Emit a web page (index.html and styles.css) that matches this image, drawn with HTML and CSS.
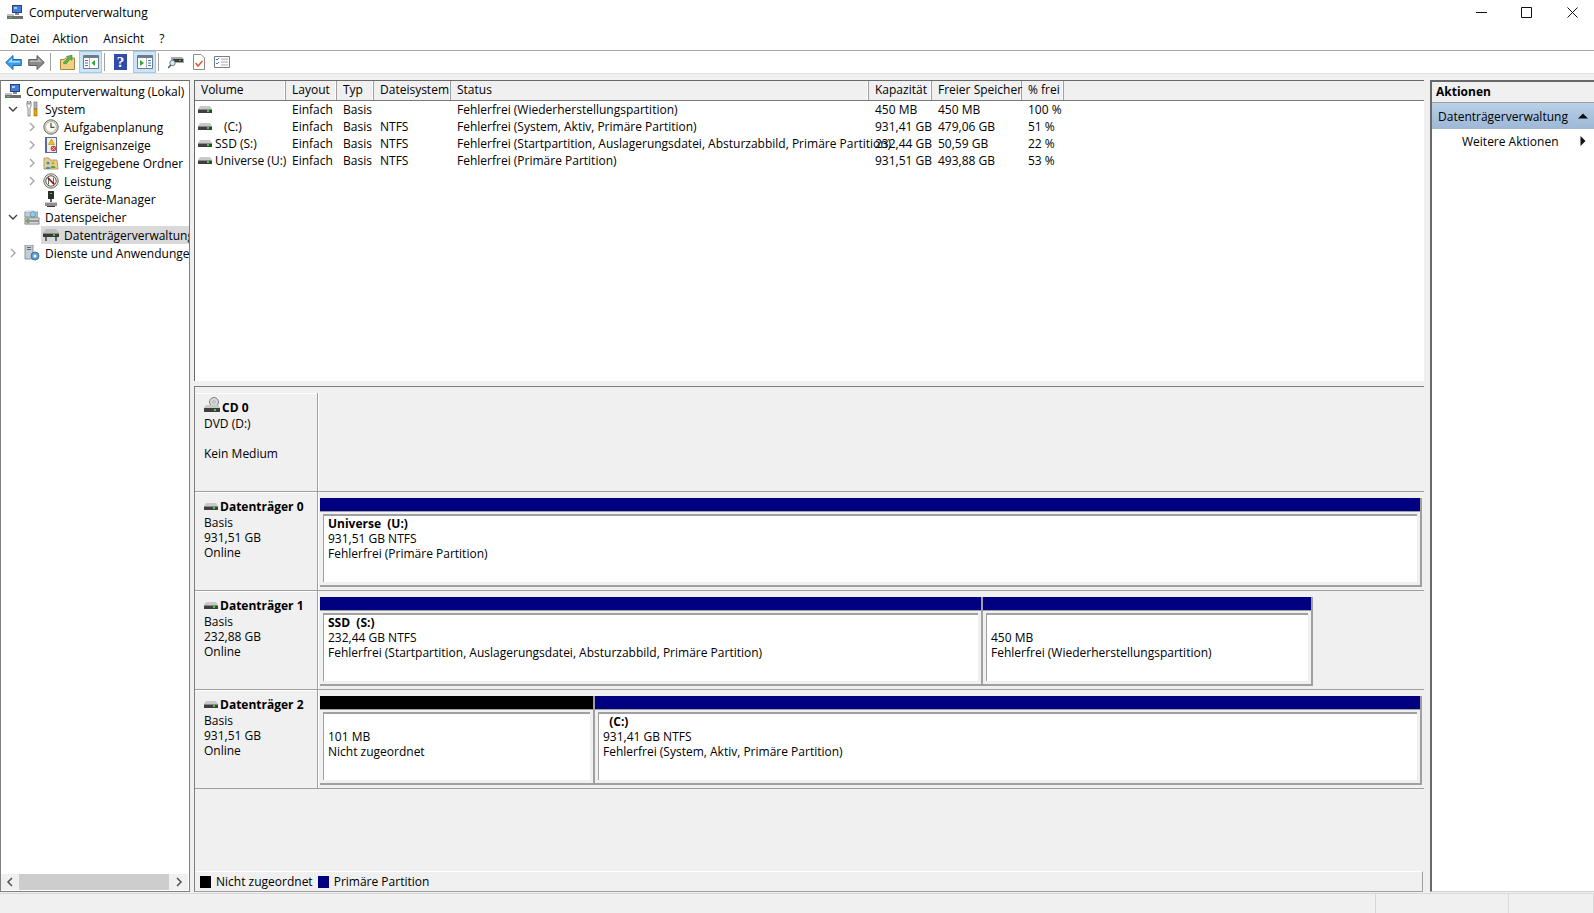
FILE: index.html
```html
<!DOCTYPE html>
<html lang="de">
  <head>
    <meta charset="UTF-8" />
    <meta name="viewport" content="width=device-width, initial-scale=1.0" />
    <title>Computerverwaltung</title>
    <link rel="stylesheet" href="styles.css">
  </head>
  <body>
    <svg class="sprites" width="0" height="0">
      <symbol id="i-disk" viewBox="0 0 14 7">
        <path d="M2 0h10l2 3H0z" fill="#c9c9c9"/>
        <path d="M0 3h14v4H0z" fill="#3f3f3f"/>
        <path d="M0 3h14v1H0z" fill="#8a8a8a"/>
        <path d="M9 4h2v2H9z" fill="#35d835"/>
      </symbol>
      <symbol id="i-computer" viewBox="0 0 16 16">
        <path d="M5 1h10v8H5z" fill="#2b3f8e"/>
        <path d="M6 2h8v6H6z" fill="#3f7fd8"/>
        <path d="M7 3h3v2H7z" fill="#a9d3f5"/>
        <path d="M8 9h4v2H8z" fill="#8b8b8b"/>
        <path d="M0 10h7v2H0z" fill="#c2c2c2"/>
        <path d="M0 12h16v3H0z" fill="#6e6e6e"/>
        <path d="M2 13h3v1H2z" fill="#35d835"/>
      </symbol>
      <symbol id="i-tools" viewBox="0 0 16 16">
        <path d="M3 1v4l1 2v8h2V7l1-2V1L6 0v3H4V0z" fill="#fff" stroke="#6a6a6a" stroke-width=".8"/>
        <path d="M10 1h3v7h-3z" fill="#b5b5b5" stroke="#6a6a6a" stroke-width=".6"/>
        <path d="M10 8h3v7h-3z" fill="#e9a90f" stroke="#8a6300" stroke-width=".6"/>
      </symbol>
      <symbol id="i-clock" viewBox="0 0 16 16">
        <circle cx="8" cy="8" r="7.2" fill="#d9d4c2" stroke="#6f6f63"/>
        <circle cx="8" cy="8" r="5.3" fill="#fbfaf3" stroke="#a8a593" stroke-width=".6"/>
        <path d="M8 4v4.3h3.4" fill="none" stroke="#4c4c4c" stroke-width="1.2"/>
      </symbol>
      <symbol id="i-event" viewBox="0 0 16 16">
        <path d="M2 0h12v16H2z" fill="#5a6a9c"/>
        <path d="M4 1h9v14H4z" fill="#f1efe6"/>
        <path d="M8.5 2l3 5.5h-6z" fill="#f2c21a" stroke="#9a7a00" stroke-width=".5"/>
        <circle cx="10.5" cy="11.5" r="2.8" fill="#d83a3a"/>
        <path d="M9.3 10.3l2.4 2.4m0-2.4l-2.4 2.4" stroke="#fff" stroke-width=".8"/>
      </symbol>
      <symbol id="i-share" viewBox="0 0 16 16">
        <path d="M1 3h5l1 2h7l1 9H1z" fill="#e8cf8a" stroke="#a98f4d" stroke-width=".8"/>
        <circle cx="5" cy="8" r="1.6" fill="#3f8ed8"/>
        <circle cx="10" cy="8" r="1.6" fill="#c9a24a"/>
        <path d="M2.5 14c0-3 5-3 5 0z" fill="#3f8ed8"/>
        <path d="M7.5 13c0-3 5-3 5 0z" fill="#4aa84a"/>
      </symbol>
      <symbol id="i-perf" viewBox="0 0 16 16">
        <circle cx="8" cy="8" r="7.2" fill="#e7e4d6" stroke="#6f6f63"/>
        <circle cx="8" cy="8" r="5.2" fill="#fff" stroke="#333" stroke-width=".8"/>
        <path d="M4.6 4.6l6.8 6.8" stroke="#d42020" stroke-width="1.6"/>
        <path d="M5.5 11.5V5l5 6V4.5" fill="none" stroke="#222" stroke-width=".7"/>
      </symbol>
      <symbol id="i-device" viewBox="0 0 16 16">
        <path d="M5 0h6v8H5z" fill="#2d2d2d"/>
        <path d="M7 2h2v1H7z" fill="#35d835"/>
        <path d="M7 8h2v3H7z" fill="#666"/>
        <path d="M2 11h12v4H2z" fill="#8d8d8d"/>
        <path d="M2 11h12v1H2z" fill="#d0d0d0"/>
        <path d="M4 15h8v1H4z" fill="#333"/>
      </symbol>
      <symbol id="i-storage" viewBox="0 0 18 18">
        <path d="M1 3h14v6H1z" fill="#c2ccd4" stroke="#6e7a84" stroke-width=".8"/>
        <path d="M3 1h10l2 2H1z" fill="#e4e9ee"/>
        <circle cx="10" cy="6" r="3" fill="#8fd0ee" stroke="#3b7fa8" stroke-width=".7"/>
        <path d="M1 10h16v3H1z" fill="#d6d6d6" stroke="#6e6e6e" stroke-width=".8"/>
        <path d="M1 14h16v3H1z" fill="#d6d6d6" stroke="#6e6e6e" stroke-width=".8"/>
        <path d="M3 11h3v1H3zM3 15h3v1H3z" fill="#35a835"/>
      </symbol>
      <symbol id="i-diskmgmt" viewBox="0 0 16 12">
        <path d="M3 0h10l3 4H0z" fill="#bdbdbd"/>
        <path d="M0 4h16v4H0z" fill="#3a3a3a"/>
        <path d="M0 4h16v1H0z" fill="#8a8a8a"/>
        <path d="M10 5h2v2h-2z" fill="#35d835"/>
        <path d="M2 8h2v4H2zM12 8h2v4h-2z" fill="#6a6a6a"/>
      </symbol>
      <symbol id="i-services" viewBox="0 0 16 16">
        <path d="M1 0h8v14H1z" fill="#c6cdd6" stroke="#76808c" stroke-width=".8"/>
        <path d="M3 2h4v1H3zM3 4h4v1H3z" fill="#5b6a7c"/>
        <circle cx="11" cy="11" r="4" fill="#5f9fd0" stroke="#2f6a9a" stroke-width=".8"/>
        <circle cx="11" cy="11" r="1.5" fill="#fff"/>
      </symbol>
      <symbol id="i-back" viewBox="0 0 17 15">
        <path d="M8 .5L.7 7.5 8 14.5v-4h8.300v-6H8z" fill="#3a9de8" stroke="#1c6bb0"/>
        <path d="M7 3v3h8v1.500H3z" fill="#a6dcfa"/>
      </symbol>
      <symbol id="i-forward" viewBox="0 0 17 15">
        <path d="M9 .5l7.300 7L9 14.500v-4H.7v-6H9z" fill="#8a8a8a" stroke="#5e5e5e"/>
        <path d="M2 5.500h8V3l4 4H2z" fill="#b8b8b8"/>
      </symbol>
      <symbol id="i-folderup" viewBox="0 0 15 16">
        <path d="M.5 5.500h4l1-1.500h9v11.500H.5z" fill="#eed184" stroke="#a8873a"/>
        <path d="M3 9l5-5-1.500-1.500L12 1v5.500L10.300 5 6 10z" fill="#5cb84a" stroke="#2c7a20" stroke-width=".5"/>
      </symbol>
      <symbol id="i-pane-left" viewBox="0 0 16 14">
        <path d="M.5.500h15v13H.5z" fill="#fff" stroke="#6d7b8a"/>
        <path d="M1 1h14v2H1z" fill="#6d7b8a"/>
        <path d="M2 5h3v1H2zM2 7.500h3v1H2zM2 10h3v1H2z" fill="#3a75b8"/>
        <path d="M6.500 3v10" stroke="#a8b2bc"/>
        <path d="M12 5v6L8.500 8z" fill="#2fa82f"/>
      </symbol>
      <symbol id="i-pane-right" viewBox="0 0 16 14">
        <path d="M.5.500h15v13H.5z" fill="#fff" stroke="#6d7b8a"/>
        <path d="M1 1h14v2H1z" fill="#6d7b8a"/>
        <path d="M11 5h3v1h-3zM11 7.500h3v1h-3zM11 10h3v1h-3z" fill="#3a75b8"/>
        <path d="M9.500 3v10" stroke="#a8b2bc"/>
        <path d="M3 5v6l4-3z" fill="#2fa82f"/>
      </symbol>
      <symbol id="i-props" viewBox="0 0 16 14">
        <path d="M3 2h11l2 2v4H3z" fill="#a9a9a9"/>
        <path d="M5 4h10v3H5z" fill="#3a3a3a"/>
        <path d="M11 5h2v1h-2z" fill="#35d835"/>
        <circle cx="4.500" cy="8" r="2.700" fill="#d7ecf7" stroke="#6a7d8a"/>
        <path d="M3 10l-3 3" stroke="#555" stroke-width="1.500"/>
      </symbol>
      <symbol id="i-doc" viewBox="0 0 12 16">
        <path d="M.5.500h7.500l3.500 3.500v11.500H.5z" fill="#fff" stroke="#8a8a8a"/>
        <path d="M2.500 9l2.500 3 4.500-5" fill="none" stroke="#e05a2b" stroke-width="1.500"/>
      </symbol>
      <symbol id="i-list" viewBox="0 0 16 12">
        <path d="M.5.500h15v11H.5z" fill="#fff" stroke="#7d7d7d"/>
        <path d="M2 3l1 1 2-2M2 7l1 1 2-2" fill="none" stroke="#3a7fd0"/>
        <path d="M7 3h7M7 6h7M7 9h7" stroke="#a8a8a8"/>
      </symbol>
      <symbol id="i-cd" viewBox="0 0 16 16">
        <circle cx="10" cy="5" r="4.500" fill="#d8d8d8" stroke="#808080"/>
        <circle cx="10" cy="5" r="1.200" fill="#fff" stroke="#808080" stroke-width=".6"/>
        <path d="M2 8h12l2 3H0z" fill="#c9c9c9"/>
        <path d="M0 11h16v4H0z" fill="#3f3f3f"/>
        <path d="M10 12h2v2h-2z" fill="#35d835"/>
      </symbol>
      <symbol id="i-open" viewBox="0 0 10 10">
        <path d="M1 3l4 4 4-4" fill="none" stroke="#404040" stroke-width="1.400"/>
      </symbol>
      <symbol id="i-closed" viewBox="0 0 10 10">
        <path d="M3 1l4 4-4 4" fill="none" stroke="#a6a6a6" stroke-width="1.400"/>
      </symbol>
    </svg>

    <header class="titlebar">
      <svg class="app-icon"><use href="#i-computer"/></svg>
      <span class="app-title">Computerverwaltung</span>
      <div class="window-buttons">
        <span class="win-btn"><svg width="11" height="11" viewBox="0 0 11 11"><path d="M0 5.500h11" stroke="#111"/></svg></span>
        <span class="win-btn"><svg width="11" height="11" viewBox="0 0 11 11"><path d="M.5.500h10v10H.5z" fill="none" stroke="#111"/></svg></span>
        <span class="win-btn"><svg width="11" height="11" viewBox="0 0 11 11"><path d="M.5.500l10 10m0-10l-10 10" stroke="#111"/></svg></span>
      </div>
    </header>

    <nav class="menubar">
      <span class="menu-datei">Datei</span>
      <span class="menu-aktion">Aktion</span>
      <span class="menu-ansicht">Ansicht</span>
      <span class="menu-help">?</span>
    </nav>

    <div class="toolbar">
      <svg class="tb-back"><use href="#i-back"/></svg>
      <svg class="tb-forward"><use href="#i-forward"/></svg>
      <span class="tb-sep"></span>
      <svg class="tb-up"><use href="#i-folderup"/></svg>
      <span class="tb-toggle"><svg class="tb-pane"><use href="#i-pane-left"/></svg></span>
      <span class="tb-sep tb-sep-tight"></span>
      <span class="tb-help">?</span>
      <span class="tb-toggle tb-toggle-second"><svg class="tb-pane"><use href="#i-pane-right"/></svg></span>
      <span class="tb-sep tb-sep-tight"></span>
      <svg class="tb-props"><use href="#i-props"/></svg>
      <svg class="tb-doc"><use href="#i-doc"/></svg>
      <svg class="tb-list"><use href="#i-list"/></svg>
    </div>

    <main class="main">
      <aside class="tree">
        <div class="tree-rows">
          <div class="tree-row">
            <div class="tree-item"><svg class="tree-icon"><use href="#i-computer"/></svg><span>Computerverwaltung (Lokal)</span></div>
          </div>
          <div class="tree-row level-1">
            <svg class="twisty"><use href="#i-open"/></svg>
            <div class="tree-item"><svg class="tree-icon"><use href="#i-tools"/></svg><span>System</span></div>
          </div>
          <div class="tree-row level-2">
            <svg class="twisty"><use href="#i-closed"/></svg>
            <div class="tree-item"><svg class="tree-icon"><use href="#i-clock"/></svg><span>Aufgabenplanung</span></div>
          </div>
          <div class="tree-row level-2">
            <svg class="twisty"><use href="#i-closed"/></svg>
            <div class="tree-item"><svg class="tree-icon"><use href="#i-event"/></svg><span>Ereignisanzeige</span></div>
          </div>
          <div class="tree-row level-2">
            <svg class="twisty"><use href="#i-closed"/></svg>
            <div class="tree-item"><svg class="tree-icon"><use href="#i-share"/></svg><span>Freigegebene Ordner</span></div>
          </div>
          <div class="tree-row level-2">
            <svg class="twisty"><use href="#i-closed"/></svg>
            <div class="tree-item"><svg class="tree-icon"><use href="#i-perf"/></svg><span>Leistung</span></div>
          </div>
          <div class="tree-row level-2">
            <span class="twisty"></span>
            <div class="tree-item"><svg class="tree-icon"><use href="#i-device"/></svg><span>Geräte-Manager</span></div>
          </div>
          <div class="tree-row level-1">
            <svg class="twisty"><use href="#i-open"/></svg>
            <div class="tree-item"><svg class="tree-icon"><use href="#i-storage"/></svg><span>Datenspeicher</span></div>
          </div>
          <div class="tree-row level-2">
            <span class="twisty"></span>
            <div class="tree-item selected"><svg class="tree-icon"><use href="#i-diskmgmt"/></svg><span>Datenträgerverwaltung</span></div>
          </div>
          <div class="tree-row level-1">
            <svg class="twisty"><use href="#i-closed"/></svg>
            <div class="tree-item"><svg class="tree-icon"><use href="#i-services"/></svg><span>Dienste und Anwendungen</span></div>
          </div>
        </div>
        <div class="hscroll">
          <svg class="hscroll-arrow" viewBox="0 0 10 10"><path d="M7 1L3 5l4 4" fill="none" stroke="#505050" stroke-width="1.500"/></svg>
          <div class="hscroll-track"><div class="hscroll-thumb"></div></div>
          <svg class="hscroll-arrow" viewBox="0 0 10 10"><path d="M3 1l4 4-4 4" fill="none" stroke="#505050" stroke-width="1.500"/></svg>
        </div>
      </aside>

      <section class="center">
        <div class="volumes">
          <div class="vol-head">
            <div class="vol-columns">
              <span>Volume</span>
              <span>Layout</span>
              <span>Typ</span>
              <span>Dateisystem</span>
              <span>Status</span>
              <span>Kapazität</span>
              <span>Freier Speicher</span>
              <span>% frei</span>
            </div>
          </div>
          <div class="vol-row vol-columns">
            <span class="vol-name"><svg class="disk-icon"><use href="#i-disk"/></svg></span>
            <span>Einfach</span><span>Basis</span><span></span>
            <span>Fehlerfrei (Wiederherstellungspartition)</span>
            <span>450 MB</span><span>450 MB</span><span>100 %</span>
          </div>
          <div class="vol-row vol-columns">
            <span class="vol-name"><svg class="disk-icon"><use href="#i-disk"/></svg><span class="vol-space">(C:)</span></span>
            <span>Einfach</span><span>Basis</span><span>NTFS</span>
            <span>Fehlerfrei (System, Aktiv, Primäre Partition)</span>
            <span>931,41 GB</span><span>479,06 GB</span><span>51 %</span>
          </div>
          <div class="vol-row vol-columns">
            <span class="vol-name"><svg class="disk-icon"><use href="#i-disk"/></svg>SSD (S:)</span>
            <span>Einfach</span><span>Basis</span><span>NTFS</span>
            <span>Fehlerfrei (Startpartition, Auslagerungsdatei, Absturzabbild, Primäre Partition)</span>
            <span>232,44 GB</span><span>50,59 GB</span><span>22 %</span>
          </div>
          <div class="vol-row vol-columns">
            <span class="vol-name"><svg class="disk-icon"><use href="#i-disk"/></svg>Universe (U:)</span>
            <span>Einfach</span><span>Basis</span><span>NTFS</span>
            <span>Fehlerfrei (Primäre Partition)</span>
            <span>931,51 GB</span><span>493,88 GB</span><span>53 %</span>
          </div>
        </div>

        <div class="disks">
          <div class="disk-row">
            <div class="disk-label">
              <div class="disk-name"><svg class="cd-icon"><use href="#i-cd"/></svg>CD 0</div>
              <div>DVD (D:)</div>
              <div>&nbsp;</div>
              <div>Kein Medium</div>
            </div>
            <div class="disk-parts"></div>
          </div>

          <div class="disk-row">
            <div class="disk-label">
              <div class="disk-name"><svg class="disk-icon"><use href="#i-disk"/></svg>Datenträger 0</div>
              <div>Basis</div>
              <div>931,51 GB</div>
              <div>Online</div>
            </div>
            <div class="disk-parts">
              <div class="part part-full">
                <div class="part-bar"></div>
                <div class="part-body">
                  <div class="part-name">Universe&nbsp; (U:)</div>
                  <div>931,51 GB NTFS</div>
                  <div>Fehlerfrei (Primäre Partition)</div>
                </div>
              </div>
            </div>
          </div>

          <div class="disk-row">
            <div class="disk-label">
              <div class="disk-name"><svg class="disk-icon"><use href="#i-disk"/></svg>Datenträger 1</div>
              <div>Basis</div>
              <div>232,88 GB</div>
              <div>Online</div>
            </div>
            <div class="disk-parts">
              <div class="part part-ssd">
                <div class="part-bar"></div>
                <div class="part-body">
                  <div class="part-name">SSD&nbsp; (S:)</div>
                  <div>232,44 GB NTFS</div>
                  <div>Fehlerfrei (Startpartition, Auslagerungsdatei, Absturzabbild, Primäre Partition)</div>
                </div>
              </div>
              <div class="part part-recovery">
                <div class="part-bar"></div>
                <div class="part-body">
                  <div>&nbsp;</div>
                  <div>450 MB</div>
                  <div>Fehlerfrei (Wiederherstellungspartition)</div>
                </div>
              </div>
            </div>
          </div>

          <div class="disk-row">
            <div class="disk-label">
              <div class="disk-name"><svg class="disk-icon"><use href="#i-disk"/></svg>Datenträger 2</div>
              <div>Basis</div>
              <div>931,51 GB</div>
              <div>Online</div>
            </div>
            <div class="disk-parts">
              <div class="part part-free">
                <div class="part-bar bar-free"></div>
                <div class="part-body">
                  <div>&nbsp;</div>
                  <div>101 MB</div>
                  <div>Nicht zugeordnet</div>
                </div>
              </div>
              <div class="part part-system">
                <div class="part-bar"></div>
                <div class="part-body">
                  <div class="part-name">&nbsp;&nbsp;(C:)</div>
                  <div>931,41 GB NTFS</div>
                  <div>Fehlerfrei (System, Aktiv, Primäre Partition)</div>
                </div>
              </div>
            </div>
          </div>

          <div class="legend">
            <span class="swatch swatch-free"></span><span class="legend-text">Nicht zugeordnet</span>
            <span class="swatch swatch-primary"></span><span class="legend-text">Primäre Partition</span>
          </div>
        </div>
      </section>

      <aside class="actions">
        <div class="actions-head">Aktionen</div>
        <div class="actions-group">
          <span>Datenträgerverwaltung</span>
          <svg class="tri" viewBox="0 0 10 10"><path d="M0 7.500L5 2.500l5 5z" fill="#111"/></svg>
        </div>
        <div class="actions-item">
          <span>Weitere Aktionen</span>
          <svg class="tri" viewBox="0 0 10 10"><path d="M2.500 0l5 5-5 5z" fill="#111"/></svg>
        </div>
      </aside>
    </main>

    <footer class="statusbar">
      <span class="status-cell status-wide"></span>
      <span class="status-cell status-narrow"></span>
    </footer>
  </body>
</html>
```

FILE: styles.css
```css
* {
  box-sizing: border-box;
}

body {
  margin: 0;
  width: 1594px;
  height: 913px;
  overflow: hidden;
  display: flex;
  flex-direction: column;
  background-color: #f0f0f0;
  color: #000;
  font-family: 'Open Sans', 'Noto Sans', Arial, sans-serif;
  font-size: 11.5px;
  line-height: 15px;
}

svg {
  display: block;
  flex: none;
}

.sprites {
  position: absolute;
}

/* title bar */
.titlebar {
  height: 30px;
  display: flex;
  align-items: center;
  background-color: #fff;
  padding-left: 7px;
}

.app-icon {
  width: 16px;
  height: 16px;
  margin-top: -6px;
}

.app-title {
  margin-left: 6px;
  margin-top: -5px;
  font-size: 12px;
}

.window-buttons {
  margin-left: auto;
  margin-right: -1px;
  display: flex;
  margin-top: -6px;
}

.win-btn {
  width: 45.500px;
  display: flex;
  justify-content: center;
}

/* menu */
.menubar {
  height: 21px;
  display: flex;
  background-color: #fff;
  border-bottom: 1px solid #a9a9a9;
  padding-top: 1px;
  font-size: 12px;
}

.menu-datei { margin-left: 10px; }
.menu-aktion { margin-left: 13px; }
.menu-ansicht { margin-left: 15px; }
.menu-help { margin-left: 15px; }

/* toolbar */
.toolbar {
  height: 23px;
  display: flex;
  align-items: center;
  background-color: #fff;
  border-bottom: 1px solid #e0e0e0;
  padding-left: 5px;
}

.tb-back,
.tb-forward {
  width: 17px;
  height: 15px;
}

.tb-forward {
  margin-left: 6px;
}

.tb-sep {
  width: 1px;
  height: 18px;
  margin: 0 9px 0 5px;
  background-color: #a0a0a0;
}

.tb-sep-tight {
  margin-left: 2px;
}

.tb-up {
  width: 15px;
  height: 16px;
}

.tb-toggle {
  width: 23px;
  height: 22px;
  margin-left: 4px;
  display: flex;
  align-items: center;
  justify-content: center;
  background-color: #cce4f7;
  border: 1px solid #99ccf0;
}

.tb-toggle-second {
  margin-left: 6px;
}

.tb-pane {
  width: 16px;
  height: 14px;
}

.tb-help {
  width: 13px;
  height: 16px;
  background-color: #2f4da8;
  color: #fff;
  font-family: 'Liberation Serif', serif;
  font-weight: bold;
  font-size: 15px;
  line-height: 16px;
  text-align: center;
}

.tb-props {
  width: 16px;
  height: 14px;
}

.tb-doc {
  width: 12px;
  height: 16px;
  margin-left: 9px;
}

.tb-list {
  width: 16px;
  height: 12px;
  margin-left: 9px;
}

/* main layout */
.main {
  flex: 1;
  min-height: 0;
  display: flex;
  padding: 6px 0 1px;
}

/* tree */
.tree {
  width: 190px;
  display: flex;
  flex-direction: column;
  background-color: #fff;
  border: 1px solid #808080;
  border-top-color: #696969;
}

.tree-rows {
  flex: 1;
  min-height: 0;
  overflow: hidden;
  padding-top: 1px;
}

.tree-row {
  height: 18px;
  display: flex;
  align-items: center;
  white-space: nowrap;
  margin-left: -1px;
  margin-right: -1px;
}

.level-1 { padding-left: 7px; }
.level-2 { padding-left: 26px; }

.twisty {
  width: 12px;
  height: 10px;
  flex: none;
}

.tree-item {
  flex: 1;
  height: 18px;
  display: flex;
  align-items: center;
  margin-left: 3px;
  padding-left: 2px;
  gap: 5px;
  font-size: 12px;
}

.tree-row:first-child .tree-item {
  margin-left: 3px;
}

.selected {
  background-color: #d9d9d9;
}

.tree-icon {
  width: 16px;
  height: 16px;
}

.hscroll {
  height: 16px;
  margin-bottom: 1px;
  display: flex;
  align-items: center;
  background-color: #f0f0f0;
  margin-right: 1px;
}

.hscroll-arrow {
  width: 18px;
  height: 10px;
}

.hscroll-track {
  flex: 1;
  height: 100%;
}

.hscroll-thumb {
  width: 150px;
  height: 100%;
  background-color: #cdcdcd;
}

/* volume list */
.center {
  width: 1230px;
  margin-left: 4px;
  display: flex;
  flex-direction: column;
}

.volumes {
  height: 301px;
  background-color: #fff;
  border-top: 1px solid #696969;
  border-left: 1px solid #696969;
}

.vol-head {
  height: 20px;
  background-color: #f0f0f0;
  border-bottom: 1px solid #7a7a7a;
}

.vol-columns {
  display: grid;
  grid-template-columns: 91px 51px 37px 77px 418px 63px 90px 42px;
  width: 869px;
  white-space: nowrap;
}

.vol-head .vol-columns {
  height: 19px;
  line-height: 18px;
  font-size: 12px;
}

.vol-head .vol-columns span {
  padding-left: 6px;
  border-right: 1px solid #a0a0a0;
  box-shadow: inset -1px 0 0 #fff;
}

.vol-row {
  height: 17px;
  line-height: 17px;
  font-size: 12px;
}

.vol-row span {
  padding-left: 6px;
  overflow: visible;
}

.vol-row .vol-name {
  display: flex;
  align-items: center;
  padding-left: 3px;
  gap: 3px;
}

.vol-space {
  margin-left: 3px;
}

.disk-icon {
  width: 14px;
  height: 7px;
}

/* disks */
.disks {
  flex: 1;
  min-height: 0;
  margin-top: 5px;
  display: flex;
  flex-direction: column;
  border-top: 1px solid #808080;
  border-left: 1px solid #808080;
  padding-top: 6px;
  font-size: 12px;
}

.disk-row {
  height: 99px;
  display: flex;
  border-bottom: 1px solid #a0a0a0;
}

.disk-label {
  width: 123px;
  padding: 6px 0 0 9px;
  border-right: 1px solid #a0a0a0;
  box-shadow: inset 0 1px 0 #fff;
}

.disk-name {
  display: flex;
  align-items: center;
  font-weight: bold;
  gap: 2px;
  height: 17px;
}

.cd-icon {
  width: 16px;
  height: 16px;
  margin-top: -5px;
}

.disk-parts {
  flex: 1;
  display: flex;
  padding: 6px 0 3px 2px;
  box-shadow: inset 1px 0 0 #fff;
}

.part {
  display: flex;
  flex-direction: column;
  border-right: 2px solid #a0a0a0;
  border-bottom: 2px solid #a0a0a0;
}

.part-full { width: 1102px; }
.part-ssd { width: 663px; }
.part-recovery { width: 330px; }
.part-free { width: 275px; }
.part-system { width: 827px; }

.part-bar {
  height: 14px;
  flex: none;
  background-color: #000080;
  border-bottom: 1px solid #a0a0a0;
}

.bar-free {
  background-color: #000;
}

.part-body {
  flex: 1;
  margin: 2px 3px 3px;
  padding-left: 4px;
  background-color: #fff;
  border-top: 2px solid #a0a0a0;
  border-left: 1px solid #a0a0a0;
  white-space: nowrap;
}

.part-name {
  font-weight: bold;
}

.legend {
  margin-top: auto;
  margin-right: 1px;
  height: 21px;
  display: flex;
  align-items: center;
  padding-left: 5px;
  border-top: 1px solid #fff;
  border-bottom: 1px solid #a0a0a0;
  border-right: 1px solid #a0a0a0;
}

.swatch {
  width: 11px;
  height: 12px;
}

.swatch-free { background-color: #000; }
.swatch-primary { background-color: #000080; margin-left: 5px; }

.legend-text {
  margin-left: 5px;
}

/* actions pane */
.actions {
  flex: 1;
  margin-left: 6px;
  background-color: #fff;
  border-top: 2px solid #696969;
  border-left: 2px solid #696969;
  border-bottom: 1px solid #d0d0d0;
  font-size: 12px;
}

.actions-head {
  height: 21px;
  line-height: 20px;
  padding-left: 4px;
  font-weight: bold;
  background-color: #f0f0f0;
  border-bottom: 1px solid #a0a0a0;
}

.actions-group {
  height: 26px;
  display: flex;
  align-items: center;
  justify-content: space-between;
  padding: 0 6px 0 6px;
  background-image: linear-gradient(#b8d0e8, #9db7d5);
}

.actions-item {
  height: 24px;
  display: flex;
  align-items: center;
  justify-content: space-between;
  padding: 0 6px 0 30px;
}

.tri {
  width: 10px;
  height: 10px;
}

/* status bar */
.statusbar {
  height: 20px;
  display: flex;
  justify-content: flex-end;
  border-top: 1px solid #d8d8d8;
}

.status-cell {
  border-left: 1px solid #d8d8d8;
}

.status-wide { width: 133px; }
.status-narrow { width: 86px; border-right: 1px solid #d8d8d8; }
```
